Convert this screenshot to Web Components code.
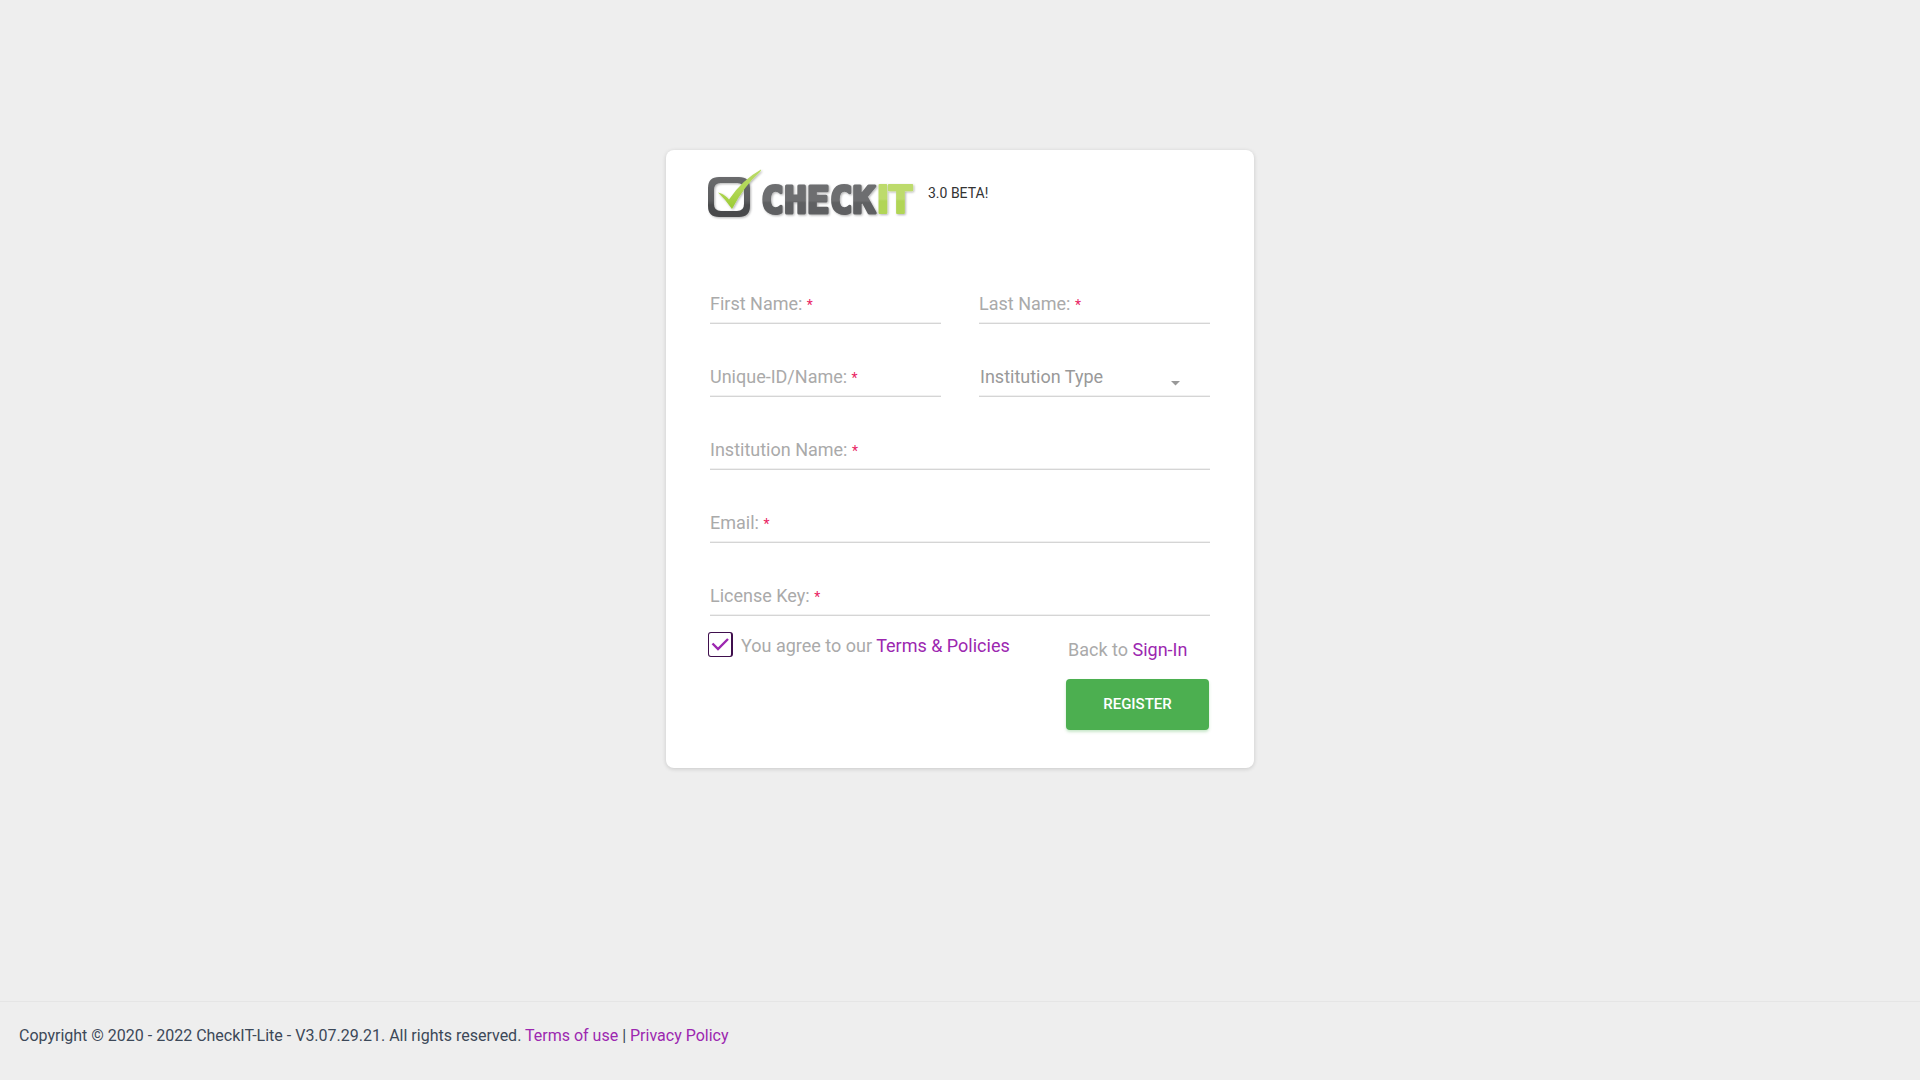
<!DOCTYPE html>
<html lang="en">
<head>
<meta charset="utf-8">
<meta name="viewport" content="width=device-width, initial-scale=1">
<title>CheckIT - Register</title>
<style>
  html { background: #eee; }
  body { margin: 0; font-family: Roboto, "Liberation Sans", sans-serif; font-size: 18px; color: #3c4858; }
</style>
</head>
<body>
<register-page></register-page>

<script>
const define = (name, html, setup) => {
  const template = document.createElement('template');
  template.innerHTML = '<style>*{box-sizing:border-box}a{color:#9c27b0;text-decoration:none}</style>' + html;
  customElements.define(name, class extends HTMLElement {
    connectedCallback() {
      if (this.shadowRoot) return;
      this.attachShadow({ mode: 'open' }).append(template.content.cloneNode(true));
      if (setup) setup(this, this.shadowRoot);
    }
  });
};

define('check-logo', `
<style>:host { display: block; } svg { display: block; } text { font-weight: 700; stroke-linejoin: round; } .check { font-family: "DejaVu Sans Mono", monospace; font-size: 38px; stroke-width: 3; } .it { font-family: Roboto, sans-serif; font-weight: 900; font-size: 39px; stroke-width: 2; }</style>
<svg width="210" height="56" viewBox="0 0 210 56" role="img" aria-label="CheckIT">
  <defs>
    <linearGradient id="box" x1="0" y1="0" x2="0" y2="1"><stop offset="0" stop-color="#6a6b6d"/><stop offset=".6" stop-color="#5b5c5e"/><stop offset=".7" stop-color="#4b4c4e"/><stop offset="1" stop-color="#48494b"/></linearGradient>
    <linearGradient id="gray" gradientUnits="userSpaceOnUse" x1="0" y1="15" x2="0" y2="47"><stop offset=".55" stop-color="#6d6e70"/><stop offset=".62" stop-color="#5f6062"/></linearGradient>
    <linearGradient id="lime" gradientUnits="userSpaceOnUse" x1="0" y1="15" x2="0" y2="47"><stop offset=".5" stop-color="#bddb6c"/><stop offset=".56" stop-color="#b1d557"/></linearGradient>
    <linearGradient id="tick" x1="0" y1="0" x2="0" y2="1"><stop offset="0" stop-color="#b9da67"/><stop offset=".55" stop-color="#b0d654"/><stop offset="1" stop-color="#9acb32"/></linearGradient>
    <filter id="soft" x="-10%" y="-10%" width="125%" height="130%"><feDropShadow dx="1" dy="1" stdDeviation="1" flood-color="#000" flood-opacity=".3"/></filter>
  </defs>
  <g filter="url(#soft)">
    <path fill="url(#box)" fill-rule="evenodd" d="M11 19H31Q42 19 42 30V48Q42 59 31 59H11Q0 59 0 48V30Q0 19 11 19ZM13 25Q6 25 6 32V46Q6 53 13 53H29Q36 53 36 46V32Q36 25 29 25Z" transform="translate(0 -10)"/>
    <path fill="url(#tick)" d="M10 24.500Q15 25 21 31.500Q34 12 53 1.500Q53.500 2 52 4Q36 18 24 41Q18 32 10 24.500Z"/>
    <text class="check" x="53" y="45" fill="url(#gray)" stroke="url(#gray)">CHECK</text>
    <text class="it" x="169" y="45" fill="url(#lime)" stroke="url(#lime)">IT</text>
  </g>
</svg>`);

define('text-field', `
<style>
  :host { display: grid; min-width: 0; }
  label, input { grid-area: 1 / 1; }
  label { height: 33px; line-height: 33px; color: #aaa; pointer-events: none; z-index: 1; }
  .star { color: #e91e63; font-size: 14px; }
  input { width: 100%; height: 37px; padding: 0; border: 0; background: linear-gradient(#f0f0f0 50%, #d5d5d5 50%) bottom / 100% 2px no-repeat; font: inherit; outline: 0; color: #495057; }
  input:focus { background-image: linear-gradient(#9c27b0, #9c27b0); }
  :host(:focus-within) label, :host([filled]) label { visibility: hidden; }
</style>
<label for="control"><slot></slot> <span class="star">*</span></label>
<input id="control" required>`, (host, root) => {
  const input = root.querySelector('input');
  input.type = host.getAttribute('type') || 'text';
  input.addEventListener('input', () => host.toggleAttribute('filled', input.value !== ''));
});

define('institution-select', `
<style>
  :host { display: grid; min-width: 0; align-items: center; }
  select, svg { grid-area: 1 / 1; }
  select { appearance: none; width: 100%; height: 37px; padding: 0 30px 4px 1px; border: 0; border-radius: 0; background: linear-gradient(#f0f0f0 50%, #d5d5d5 50%) bottom / 100% 2px no-repeat; font: inherit; color: #999; outline: 0; }
  svg { justify-self: end; margin: 10px 30px 0 0; pointer-events: none; }
</style>
<select aria-label="Institution Type"><option>Institution Type</option><option>School</option><option>University</option><option>Company</option></select>
<svg width="9" height="5" viewBox="0 0 9 5"><path d="M0 0H9L4.500 4.500Z" fill="#999"/></svg>`);

define('terms-check', `
<style>
  :host { display: flex; align-items: center; gap: 8px; color: #aaa; height: 26px; }
  input { appearance: none; display: grid; width: 25px; height: 25px; margin: 0; border: 1px solid #3f0f4d; border-right-width: 2px; border-radius: 3px; background: #fff; }
  .box { display: grid; }
  .box > * { grid-area: 1 / 1; }
  svg { pointer-events: none; visibility: hidden; }
  input:checked + svg { visibility: visible; }
  label { padding-top: 2px; }
</style>
<span class="box"><input id="agree" type="checkbox" checked><svg width="25" height="25" viewBox="0 0 25 25"><path d="M4.500 11.500L10 17L20 7" fill="none" stroke="#9c27b0" stroke-width="2.400"/></svg></span>
<label for="agree">You agree to our <a href="#terms">Terms &amp; Policies</a></label>`);

define('action-button', `
<style>
  :host { display: block; }
  button { width: 100%; height: 51px; padding: 0 0 2px; border: 0; border-radius: 4px; background: #4caf50; color: #fff; font: 500 15px Roboto, sans-serif; text-transform: uppercase; box-shadow: 0 2px 3px rgba(76,175,80,.3); cursor: pointer; }
</style>
<button type="button"><slot></slot></button>`);

define('register-card', `
<style>
  :host { display: block; width: 588px; max-width: 100%; background: #fff; border-radius: 8px; box-shadow: 0 1px 4px rgba(0,0,0,.16); }
  header { display: flex; gap: 10px; height: 137px; padding: 18px 42px 0; }
  header span { font-size: 14px; line-height: 16px; margin-top: 17px; color: #333; }
  form { padding: 0 44px 38px; }
  .fields { display: grid; grid-template-columns: 1fr 1fr; gap: 36px 38px; }
  .wide { grid-column: 1 / -1; }
  .end { display: flex; justify-content: space-between; align-items: flex-start; padding-top: 15px; margin: 0 1px 0 -2px; }
  .side { width: 143px; color: #aaa; }
  .side p { margin: 8px 2px 18px; line-height: 22px; }
</style>
<header><check-logo></check-logo><span>3.0 BETA!</span></header>
<form>
  <div class="fields">
    <text-field>First Name:</text-field>
    <text-field>Last Name:</text-field>
    <text-field>Unique-ID/Name:</text-field>
    <institution-select></institution-select>
    <text-field class="wide">Institution Name:</text-field>
    <text-field class="wide" type="email">Email:</text-field>
    <text-field class="wide">License Key:</text-field>
  </div>
  <div class="end">
    <terms-check></terms-check>
    <div class="side"><p>Back to <a href="#sign-in">Sign-In</a></p><action-button>Register</action-button></div>
  </div>
</form>`);

define('page-footer', `
<style>
  :host { display: block; border-top: 1px solid #e5e5e5; padding: 22px 19px 32px; font-size: 16px; line-height: 24px; }
</style>
<footer>Copyright © 2020 - 2022 CheckIT-Lite - V3.07.29.21. All rights reserved. <a href="#use">Terms of use</a> | <a href="#privacy">Privacy Policy</a></footer>`);

define('register-page', `
<style>
  :host { display: flex; flex-direction: column; min-height: 100vh; background: #eee; }
  main { flex: 1; display: flex; justify-content: center; align-items: flex-start; padding: 150px 16px 40px; }
</style>
<main><register-card></register-card></main>
<page-footer></page-footer>`);
</script>
</body>
</html>
